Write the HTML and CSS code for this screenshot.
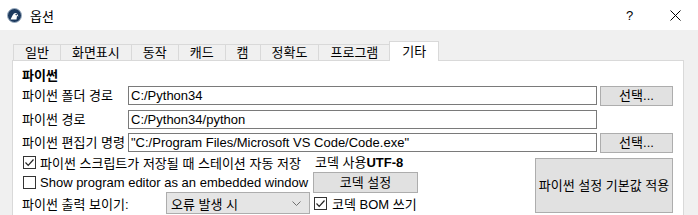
FILE: index.html
```html
<!DOCTYPE html>
<html lang="ko">
<head>
<meta charset="utf-8">
<title>옵션</title>
<link rel="stylesheet" href="styles.css">
</head>
<body>
<div class="window">
  <div class="titlebar">
    <svg class="app-icon" viewBox="0 0 15 15" width="15" height="15">
      <circle cx="7.5" cy="7.5" r="7" fill="#1d3a5e" stroke="#9fb0c2" stroke-width="1"/>
      <path d="M3.5 11.5 L5.5 7.5 Q7.5 4 10 5.5 L11.5 8.5 L10 8 L9.5 11.5 Z" fill="#ffffff"/>
      <circle cx="9.2" cy="6.6" r="0.8" fill="#1d3a5e"/>
    </svg>
    <span class="title">옵션</span>
    <span class="help">?</span>
    <svg class="close" viewBox="0 0 11 11" width="11" height="11">
      <path d="M0.5 0.5 L10.5 10.5 M10.5 0.5 L0.5 10.5" stroke="#000" stroke-width="1" fill="none"/>
    </svg>
  </div>
  <div class="main">
    <div class="tabs">
      <div class="tab">일반</div>
      <div class="tab">화면표시</div>
      <div class="tab">동작</div>
      <div class="tab">캐드</div>
      <div class="tab">캠</div>
      <div class="tab">정확도</div>
      <div class="tab">프로그램</div>
      <div class="tab active">기타</div>
    </div>
    <div class="panel">
      <div class="section-title">파이썬</div>
      <div class="form">
        <div class="label">파이썬 폴더 경로</div>
        <div class="input">C:/Python34</div>
        <div class="btn">선택...</div>

        <div class="label">파이썬 경로</div>
        <div class="input">C:/Python34/python</div>
        <div></div>

        <div class="label">파이썬 편집기 명령</div>
        <div class="input">"C:/Program Files/Microsoft VS Code/Code.exe"</div>
        <div class="btn">선택...</div>
      </div>
      <div class="lower">
        <div class="check-row">
          <span class="checkbox"><svg viewBox="0 0 11 11" width="11" height="11"><path d="M1.5 5.5 L4.2 8.3 L9.5 2.5" stroke="#222" stroke-width="1.2" fill="none"/></svg></span>
          <span>파이썬 스크립트가 저장될 때 스테이션 자동 저장</span>
        </div>
        <div class="codec-text">코덱 사용<b>UTF-8</b></div>
        <div class="btn big">파이썬 설정 기본값 적용</div>

        <div class="check-row">
          <span class="checkbox"></span>
          <span>Show program editor as an embedded window</span>
        </div>
        <div class="codec-cell"><div class="btn codec-btn">코덱 설정</div></div>

        <div class="output-row">
          <span>파이썬 출력 보이기:</span>
          <div class="combo">
            <span>오류 발생 시</span>
            <svg class="chev" viewBox="0 0 9 5" width="9" height="5"><path d="M0.5 0.5 L4.5 4.5 L8.5 0.5" stroke="#707070" stroke-width="1" fill="none"/></svg>
          </div>
        </div>
        <div class="check-row bom">
          <span class="checkbox"><svg viewBox="0 0 11 11" width="11" height="11"><path d="M1.5 5.5 L4.2 8.3 L9.5 2.5" stroke="#222" stroke-width="1.2" fill="none"/></svg></span>
          <span>코덱 BOM 쓰기</span>
        </div>
      </div>
    </div>
  </div>
</div>
</body>
</html>
```
FILE: styles.css
```css
* { box-sizing: border-box; }

body {
  margin: 0;
  font-family: "Liberation Sans", "Noto Sans CJK KR", sans-serif;
  font-size: 13px;
  color: #000;
}

.window {
  width: 698px;
  height: 215px;
  overflow: hidden;
  background: #f0f0f0;
}

.titlebar {
  height: 30px;
  background: #fff;
  display: flex;
  align-items: center;
  padding-left: 7px;
}

.app-icon { margin-right: 8px; }

.title { font-size: 13px; }

.help {
  margin-left: auto;
  width: 7px;
  font-size: 13px;
}

.close {
  margin-left: 37px;
  margin-right: 17px;
}

.main {
  padding: 11px 0 0 12px;
}

.tabs {
  display: flex;
  align-items: flex-end;
  height: 19px;
  padding-left: 1px;
}

.tab {
  position: relative;
  height: 16px;
  line-height: 15px;
  padding: 0 11px;
  border: 1px solid #d9d9d9;
  border-bottom: none;
  margin-right: -1px;
  background: #f0f0f0;
  white-space: nowrap;
}

.tab.active {
  z-index: 2;
  height: 20px;
  line-height: 19px;
  margin-bottom: -1px;
  background: #fff;
  padding: 0 12px;
}

.panel {
  width: 672px;
  height: 200px;
  border: 1px solid #d9d9d9;
  background: #fff;
  padding: 7px 0 0 9px;
}

.section-title {
  font-weight: bold;
  line-height: 16px;
  height: 16px;
  margin-bottom: 2px;
}

.form {
  display: grid;
  grid-template-columns: 103px 469px 73px;
  column-gap: 3px;
  grid-template-rows: 24px 23px 20px;
  align-items: start;
}

.label {
  line-height: 19px;
  white-space: nowrap;
}

.input {
  height: 19px;
  border: 1px solid #7a7a7a;
  padding-left: 2px;
  line-height: 17px;
  white-space: nowrap;
  overflow: hidden;
  background: #fff;
}

.btn {
  height: 20px;
  background: #e1e1e1;
  border: 1px solid #adadad;
  line-height: 18px;
  text-align: center;
  white-space: nowrap;
}

.lower {
  display: grid;
  grid-template-columns: 291px 222px 138px;
  grid-template-rows: 19px 20px 22px;
}

.check-row {
  display: flex;
  align-items: center;
  gap: 4px;
  white-space: nowrap;
}

.checkbox {
  width: 13px;
  height: 13px;
  margin-left: 1px;
  border: 1px solid #333;
  background: #fff;
  display: flex;
  align-items: center;
  justify-content: center;
  flex: none;
}

.codec-text {
  padding-left: 2px;
  line-height: 19px;
  white-space: nowrap;
}

.codec-cell { display: flex; }

.codec-btn {
  width: 105px;
  height: 21px;
  line-height: 19px;
}

.big {
  grid-column: 3;
  grid-row: 1 / 4;
  margin-top: 5px;
  height: 55px;
  line-height: 53px;
}

.output-row {
  display: flex;
  align-items: center;
  white-space: nowrap;
}

.combo {
  margin-left: auto;
  margin-right: 3px;
  width: 144px;
  height: 22px;
  background: #e5e5e5;
  border: 1px solid #adadad;
  display: flex;
  align-items: center;
  padding: 0 8px 0 4px;
}

.chev { margin-left: auto; }

.bom { gap: 5px; }
```
